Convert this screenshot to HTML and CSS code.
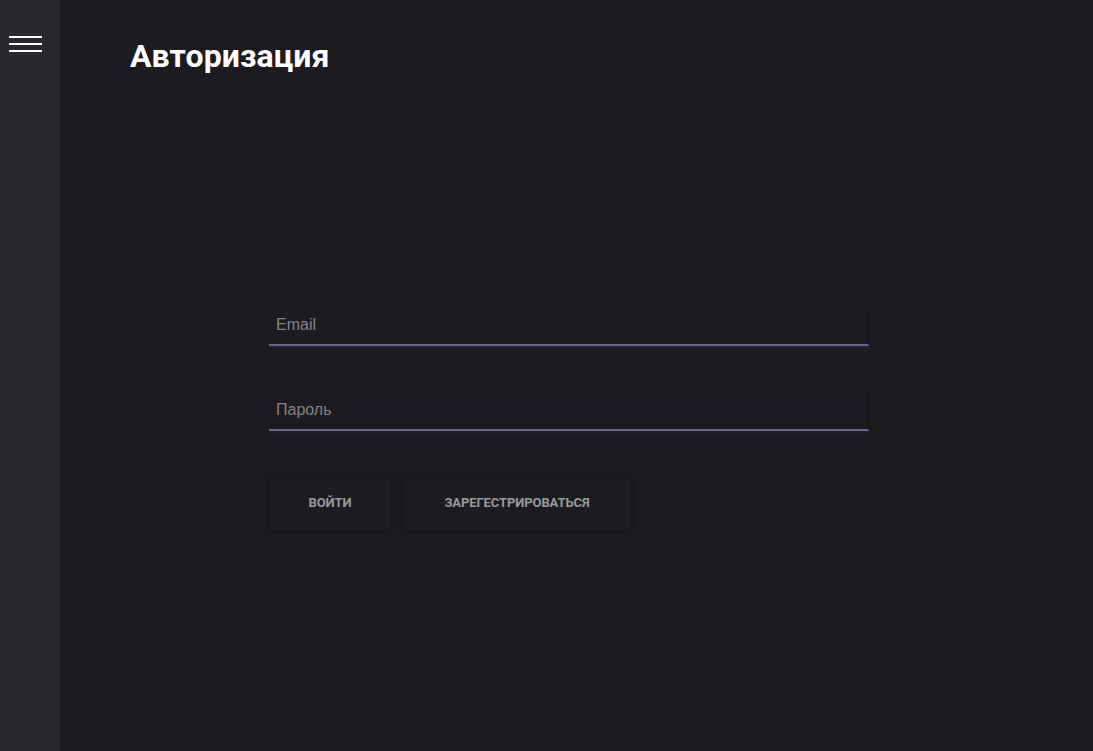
FILE: index.html
```html
<!DOCTYPE html>
<html lang="ru">
<head>
<meta charset="utf-8">
<title>Авторизация</title>
<link rel="stylesheet" href="styles.css">
</head>
<body>
<div class="app">
  <aside class="sidebar">
    <button class="burger" aria-label="Меню">
      <span></span><span></span><span></span>
    </button>
  </aside>
  <main class="content">
    <h1 class="title">Авторизация</h1>
    <form class="form">
      <input class="field" type="email" placeholder="Email">
      <input class="field" type="password" placeholder="Пароль">
      <div class="actions">
        <button type="button" class="btn btn-login">Войти</button>
        <button type="button" class="btn btn-register">Зарегестрироваться</button>
      </div>
    </form>
  </main>
</div>
</body>
</html>
```
FILE: styles.css
```css
* { box-sizing: border-box; }
html, body { margin: 0; padding: 0; height: 100%; }
body {
  background: #1c1b20;
  font-family: Roboto, "Liberation Sans", sans-serif;
  color: #fff;
}
.app {
  display: flex;
  min-height: 751px;
}
.sidebar {
  width: 60px;
  flex: 0 0 60px;
  background: #27282d;
  padding-top: 36px;
}
.burger {
  display: flex;
  flex-direction: column;
  gap: 5px;
  background: none;
  border: 0;
  padding: 0;
  margin-left: 9px;
  cursor: pointer;
}
.burger span {
  display: block;
  width: 33px;
  height: 2px;
  background: #fff;
}
.content {
  flex: 1;
  padding: 37px 0 0 70px;
}
.title {
  margin: 0;
  font-size: 32px;
  font-weight: 700;
  line-height: 38px;
  letter-spacing: 0.1px;
}
.form {
  width: 600px;
  margin: 232px 0 0 139px;
  display: flex;
  flex-direction: column;
}
.field {
  height: 39px;
  background: #1c1b20;
  border: 0;
  border-right: 1px solid #151419;
  border-bottom: 2px solid #6b6389;
  box-shadow: 0 2px 0 #222030;
  color: #ccc;
  font-family: "Liberation Sans", Arial, sans-serif;
  font-size: 16px;
  padding: 0 7px 2px;
  outline: none;
}
.field + .field { margin-top: 46px; }
.field::placeholder { color: #858387; }
.actions {
  display: flex;
  gap: 12px;
  margin-top: 44px;
}
.btn {
  height: 55px;
  background: #1c1b20;
  border: 0;
  border-radius: 2px;
  box-shadow: 0 1px 5px rgba(0,0,0,0.35);
  color: #9a999d;
  font-family: Roboto, "Liberation Sans", sans-serif;
  font-weight: 700;
  font-size: 13px;
  text-transform: uppercase;
  letter-spacing: -0.1px;
  cursor: pointer;
}
.btn-login { width: 122px; }
.btn-register { width: 228px; }
```
